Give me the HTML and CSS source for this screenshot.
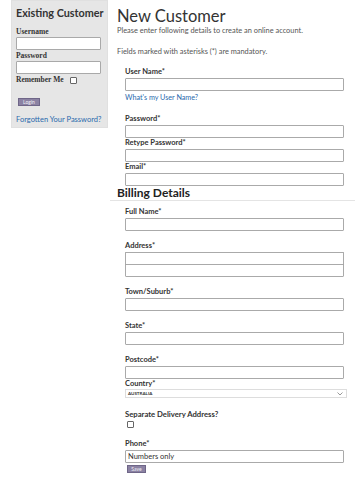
FILE: index.html
```html
<!DOCTYPE html>
<html lang="en">
<head>
  <meta charset="UTF-8" />
  <title>Register</title>
  <link rel="stylesheet" href="styles.css">
</head>
<body>
  <div class="page">
    <aside class="login-box">
      <h3>Existing Customer</h3>
      <label>Username</label>
      <input type="text" class="login-input">
      <label class="pw-label">Password</label>
      <input type="password" class="login-input">
      <div class="remember">Remember Me <span class="check"></span></div>
      <button class="btn login-btn">Login</button>
      <a href="#" class="forgot">Forgotten Your Password?</a>
    </aside>

    <main class="register">
      <h1>New Customer</h1>
      <p class="intro">Please enter following details to create an online account.</p>
      <p class="intro second">Fields marked with asterisks (*) are mandatory.</p>

      <div class="fields account">
        <div class="field">
          <label>User Name*</label>
          <input type="text">
          <a href="#" class="help">What's my User Name?</a>
        </div>
        <div class="field pw-field">
          <label>Password*</label>
          <input type="password">
        </div>
        <div class="field">
          <label>Retype Password*</label>
          <input type="password">
        </div>
        <div class="field">
          <label>Email*</label>
          <input type="text">
        </div>
      </div>

      <h2>Billing Details</h2>

      <div class="fields">
        <div class="field spaced">
          <label>Full Name*</label>
          <input type="text">
        </div>
        <div class="field spaced">
          <label>Address*</label>
          <input type="text" class="addr1">
          <input type="text" class="addr2">
        </div>
        <div class="field spaced">
          <label>Town/Suburb*</label>
          <input type="text">
        </div>
        <div class="field spaced">
          <label>State*</label>
          <input type="text">
        </div>
        <div class="field">
          <label>Postcode*</label>
          <input type="text">
        </div>
        <div class="field country">
          <label>Country*</label>
          <div class="select">AUSTRALIA
            <svg width="6" height="4" viewBox="0 0 6 4"><path d="M0.5 0.5 L3 3 L5.5 0.5" fill="none" stroke="#999" stroke-width="1"/></svg>
          </div>
        </div>
        <div class="field delivery">
          <label class="delivery-label">Separate Delivery Address?</label>
          <span class="check"></span>
        </div>
        <div class="field">
          <label>Phone*</label>
          <input type="text" class="phone" value="Numbers only">
          <button class="btn save-btn">Save</button>
        </div>
      </div>
    </main>
  </div>
</body>
</html>
```

FILE: styles.css
```css
* {
  box-sizing: border-box;
  margin: 0;
  padding: 0;
}

body {
  font-family: Lato, 'Noto Sans', sans-serif;
  color: #333;
  background: #fff;
}

.page {
  display: flex;
  align-items: flex-start;
}

.login-box {
  width: 97px;
  margin-left: 11px;
  background: #e6e6e6;
  border: 1px solid #e0e0e0;
  padding: 5px 5px 2px 4px;
  display: flex;
  flex-direction: column;
}

.login-box h3 {
  font-size: 10.8px;
  line-height: 14px;
  white-space: nowrap;
  color: #333;
  margin-bottom: 7px;
}

.login-box label {
  font-size: 7.5px;
  line-height: 10px;
  font-weight: bold;
  font-family: 'Liberation Serif', serif;
}

.login-box .pw-label {
  margin-top: 1px;
}

.login-input {
  width: 85px;
  height: 13px;
  border: 1px solid #a9a9a9;
  border-radius: 1px;
  background: #fff;
}

.remember {
  font-size: 7.5px;
  line-height: 10px;
  font-weight: bold;
  font-family: 'Liberation Serif', serif;
  display: flex;
  align-items: center;
  gap: 6px;
  margin-top: 1px;
}

.check {
  display: inline-block;
  width: 7px;
  height: 7px;
  border: 1px solid #666;
  border-radius: 1px;
  background: #fff;
}

.btn {
  background: #8b82a3;
  color: #f2f0f6;
  border: 1px solid #6f6688;
  font-size: 5px;
  font-family: Lato, sans-serif;
  height: 8px;
  line-height: 6px;
  padding: 0 2px;
}

.login-btn {
  align-self: flex-start;
  width: 22px;
  margin: 13px 0 0 2px;
}

.forgot {
  font-size: 7.5px;
  line-height: 10px;
  color: #2a6aad;
  text-decoration: none;
  margin-top: 9px;
}

.register {
  flex: 1;
  padding-left: 2px;
}

.register h1 {
  font-size: 16.5px;
  font-weight: normal;
  color: #333;
  padding: 7px 0 0 7px;
  line-height: 18px;
}

.intro {
  font-size: 7.4px;
  line-height: 9px;
  color: #555;
  padding-left: 7px;
  margin-top: 1px;
}

.intro.second {
  margin-top: 12px;
}

.fields {
  padding: 0 11px 0 15px;
}

.account {
  margin-top: 11px;
}

.field {
  display: flex;
  flex-direction: column;
  align-items: flex-start;
}

.field label {
  font-size: 7.5px;
  font-weight: bold;
  color: #333;
  line-height: 10px;
  margin-bottom: 1px;
}

.field input {
  width: 100%;
  height: 13px;
  border: 1px solid #aaa;
  border-radius: 1px;
  background: #fff;
}

.field .addr1 {
  border-bottom-color: #555;
}

.field .addr2 {
  margin-top: -1px;
}

.pw-field {
  margin-top: 12px;
}

.spaced {
  margin-bottom: 10px;
}

.help {
  font-size: 7.2px;
  line-height: 9px;
  color: #2a6aad;
  text-decoration: none;
  margin-top: 2px;
}

.register h2 {
  font-size: 12px;
  line-height: 14px;
  font-weight: bold;
  color: #222;
  padding-left: 7px;
  border-bottom: 1px solid #e4e4e4;
  margin-bottom: 6px;
}

.country label {
  margin-bottom: 0;
}

.select {
  width: calc(100% + 3px);
  height: 9px;
  border: 1px solid #ddd;
  font-size: 4.5px;
  font-weight: bold;
  color: #333;
  display: flex;
  justify-content: space-between;
  align-items: center;
  padding: 0 3px 0 2px;
}

.delivery {
  margin-top: 11px;
  margin-bottom: 11px;
}

.field .delivery-label {
  font-size: 7.7px;
  margin-bottom: 2px;
}

.delivery .check {
  margin-left: 2px;
}

.phone {
  font-size: 7.5px;
  font-family: Lato, sans-serif;
  color: #333;
  padding-left: 2px;
}

.save-btn {
  margin: 2px 0 0 2px;
  width: 19px;
}
```
